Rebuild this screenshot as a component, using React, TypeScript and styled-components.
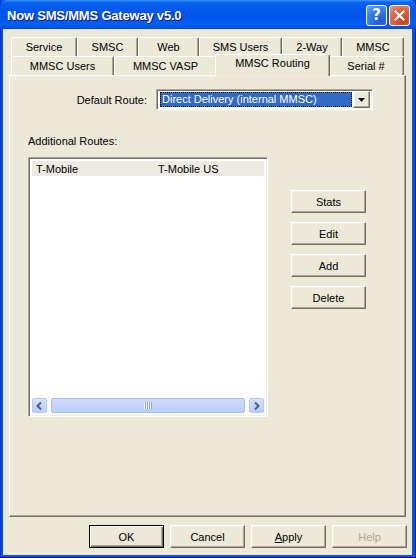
import React, { FC } from 'react';
import styled, { createGlobalStyle, css } from 'styled-components';

const GlobalStyle = createGlobalStyle`
	html, body {
		margin: 0;
		padding: 0;
		background: #ffffff;
	}
	* {
		box-sizing: border-box;
	}
`;

const raised = css`
	background: #ece9d8;
	border: 1px solid;
	border-color: #ffffff #716f64 #716f64 #ffffff;
	box-shadow: inset -1px -1px 0 #aca899, inset 1px 1px 0 #f1efe2;
`;

const sunken = css`
	border: 1px solid;
	border-color: #aca899 #ffffff #ffffff #aca899;
	box-shadow: inset 1px 1px 0 #716f64, inset -1px -1px 0 #f1efe2;
`;

type TabDef = { label: string; width: number; selected?: boolean };

const rowOne: TabDef[] = [
	{ label: 'Service', width: 66 },
	{ label: 'SMSC', width: 61 },
	{ label: 'Web', width: 61 },
	{ label: 'SMS Users', width: 83 },
	{ label: '2-Way', width: 60 },
	{ label: 'MMSC', width: 62 },
];

const rowTwo: TabDef[] = [
	{ label: 'MMSC Users', width: 103 },
	{ label: 'MMSC VASP', width: 103 },
	{ label: 'MMSC Routing', width: 111, selected: true },
	{ label: 'Serial #', width: 76 },
];

const sideButtons = ['Stats', 'Edit', 'Add', 'Delete'];

const App: FC = () => {
	return (
		<Window>
			<GlobalStyle />
			<TitleBar>
				<Title>Now SMS/MMS Gateway v5.0</Title>
				<Caption>
					<HelpButton>?</HelpButton>
					<CloseButton>
						<svg width="11" height="11" viewBox="0 0 11 11">
							<path d="M1.5 1.5 L9.5 9.5 M9.5 1.5 L1.5 9.5" stroke="#fff" strokeWidth="2.2" strokeLinecap="square" />
						</svg>
					</CloseButton>
				</Caption>
			</TitleBar>
			<Client>
				<TabStrip>
					{[rowOne, rowTwo].map((row, i) => (
						<TabRow key={i}>
							{row.map((tab) => (
								<Tab key={tab.label} $width={tab.width} $selected={tab.selected}>
									{tab.label}
								</Tab>
							))}
						</TabRow>
					))}
				</TabStrip>
				<Panel>
					<RouteRow>
						<FieldLabel>Default Route:</FieldLabel>
						<Combo>
							<ComboValue>Direct Delivery (internal MMSC)</ComboValue>
							<ComboArrow>
								<svg width="7" height="4" viewBox="0 0 7 4">
									<path d="M0 0 H7 L3.5 4 Z" fill="#000" />
								</svg>
							</ComboArrow>
						</Combo>
					</RouteRow>
					<SectionLabel>Additional Routes:</SectionLabel>
					<ListArea>
						<ListBox>
							<ListRows>
								<ListRow>
									<ListCell $width={122}>T-Mobile</ListCell>
									<ListCell>T-Mobile US</ListCell>
								</ListRow>
							</ListRows>
							<HScroll>
								<ScrollArrow>
									<svg width="7" height="8" viewBox="0 0 7 8">
										<path d="M5 0.5 L1.5 4 L5 7.5" stroke="#4d6185" strokeWidth="2" fill="none" />
									</svg>
								</ScrollArrow>
								<ScrollThumb>
									<Grip />
								</ScrollThumb>
								<ScrollArrow>
									<svg width="7" height="8" viewBox="0 0 7 8">
										<path d="M2 0.5 L5.5 4 L2 7.5" stroke="#4d6185" strokeWidth="2" fill="none" />
									</svg>
								</ScrollArrow>
							</HScroll>
						</ListBox>
						<ButtonColumn>
							{sideButtons.map((b) => (
								<PushButton key={b}>{b}</PushButton>
							))}
						</ButtonColumn>
					</ListArea>
				</Panel>
				<Footer>
					<PushButton $default>OK</PushButton>
					<PushButton>Cancel</PushButton>
					<PushButton>
						<u>A</u>pply
					</PushButton>
					<PushButton $disabled>Help</PushButton>
				</Footer>
			</Client>
		</Window>
	);
};

const Window = styled.div`
	width: 416px;
	height: 558px;
	display: flex;
	flex-direction: column;
	background: #0055e5;
	box-shadow: inset -1px -1px 0 #00138c, inset 1px 0 0 #0831d9;
	font-family: 'Liberation Sans', Arial, sans-serif;
	font-size: 11px;
	color: #000;
	overflow: hidden;
`;

const TitleBar = styled.div`
	height: 29px;
	flex: none;
	display: flex;
	align-items: center;
	justify-content: space-between;
	padding: 0 6px 0 7px;
	border-radius: 7px 7px 0 0;
	background: linear-gradient(
		to bottom,
		#3d95ff 0%,
		#0a62ef 8%,
		#0058ee 30%,
		#0055ea 60%,
		#0061f6 85%,
		#0046d5 100%
	);
`;

const Title = styled.div`
	color: #ffffff;
	font-weight: bold;
	font-size: 13px;
	letter-spacing: -0.2px;
	text-shadow: 1px 1px 0 #0a1883;
	padding-top: 1px;
`;

const Caption = styled.div`
	display: flex;
	gap: 2px;
	padding-top: 1px;
`;

const captionButton = css`
	width: 21px;
	height: 21px;
	border: 1px solid #ffffff;
	border-radius: 3px;
	display: flex;
	align-items: center;
	justify-content: center;
	color: #ffffff;
`;

const HelpButton = styled.div`
	${captionButton};
	background: radial-gradient(circle at 70% 80%, #1e56d8 0%, #3a7cf5 60%, #6fa2ff 100%);
	font-family: 'DejaVu Sans', sans-serif;
	font-weight: bold;
	font-size: 15px;
`;

const CloseButton = styled.div`
	${captionButton};
	background: radial-gradient(circle at 70% 80%, #c7461e 0%, #e2653f 60%, #f09c7e 100%);
`;

const Client = styled.div`
	flex: 1;
	display: flex;
	flex-direction: column;
	margin: 0 4px 3px 3px;
	padding: 8px 6px 0 6px;
	background: #ece9d8;
`;

const TabStrip = styled.div`
	padding: 0 2px;
`;

const TabRow = styled.div`
	display: flex;
	height: 19px;
`;

const Tab = styled.div<{ $width: number; $selected?: boolean }>`
	width: ${(p) => p.$width}px;
	flex: none;
	height: 19px;
	background: #ece9d8;
	border-top: 1px solid #ffffff;
	border-left: 1px solid #ffffff;
	border-right: 1px solid #716f64;
	box-shadow: inset -1px 0 0 #aca899;
	border-radius: 2px 2px 0 0;
	text-align: center;
	padding-top: 3px;
	${(p) =>
		p.$selected &&
		css`
			position: relative;
			z-index: 2;
			height: 22px;
			width: ${p.$width + 4}px;
			margin: -2px -2px 0;
			padding-top: 2px;
		`}
`;

const Panel = styled.div`
	height: 442px;
	flex: none;
	${raised};
	padding: 13px 0 0 18px;
`;

const RouteRow = styled.div`
	display: flex;
	align-items: center;
	gap: 9px;
`;

const FieldLabel = styled.div`
	width: 119px;
	text-align: right;
`;

const Combo = styled.div`
	width: 217px;
	height: 21px;
	${sunken};
	background: #ffffff;
	display: flex;
	align-items: center;
	padding: 2px 2px 2px 3px;
	gap: 1px;
`;

const ComboValue = styled.div`
	flex: 1;
	height: 15px;
	background: #316ac5;
	color: #ffffff;
	border: 1px dotted #e8c860;
	outline: 1px dotted #000;
	outline-offset: -1px;
	padding-left: 1px;
	line-height: 13px;
	white-space: nowrap;
	overflow: hidden;
`;

const ComboArrow = styled.div`
	width: 17px;
	height: 17px;
	${raised};
	display: flex;
	align-items: center;
	justify-content: center;
`;

const SectionLabel = styled.div`
	margin-top: 25px;
	height: 13px;
`;

const ListArea = styled.div`
	display: flex;
	margin-top: 9px;
`;

const ListBox = styled.div`
	width: 240px;
	height: 260px;
	${sunken};
	background: #ffffff;
	padding: 2px;
	display: flex;
	flex-direction: column;
`;

const ListRows = styled.div`
	flex: 1;
	padding: 1px 1px 0;
`;

const ListRow = styled.div`
	display: flex;
	height: 15px;
	align-items: center;
	background: #eeece2;
	padding-left: 4px;
`;

const ListCell = styled.div<{ $width?: number }>`
	width: ${(p) => (p.$width ? `${p.$width}px` : 'auto')};
	white-space: nowrap;
`;

const HScroll = styled.div`
	height: 17px;
	display: flex;
	align-items: center;
	gap: 2px;
	padding: 1px 1px;
	background: #fbfbf7;
`;

const ScrollArrow = styled.div`
	width: 15px;
	height: 15px;
	border: 1px solid #b7caf5;
	border-radius: 2px;
	background: linear-gradient(to bottom, #d6e2fc, #b9cdfa);
	display: flex;
	align-items: center;
	justify-content: center;
`;

const ScrollThumb = styled.div`
	flex: 1;
	height: 15px;
	margin: 0 2px;
	border: 1px solid #a8c0f2;
	border-radius: 2px;
	background: linear-gradient(to bottom, #cddbfc, #bcd0fa);
	display: flex;
	align-items: center;
	justify-content: center;
`;

const Grip = styled.div`
	width: 8px;
	height: 7px;
	background: repeating-linear-gradient(
		to right,
		#eef3fe 0px,
		#eef3fe 1px,
		#8ca8e6 1px,
		#8ca8e6 2px
	);
`;

const ButtonColumn = styled.div`
	display: flex;
	flex-direction: column;
	gap: 9px;
	margin-left: 23px;
	padding-top: 33px;
`;

const PushButton = styled.div<{ $default?: boolean; $disabled?: boolean }>`
	width: 75px;
	height: 23px;
	flex: none;
	${raised};
	display: flex;
	align-items: center;
	justify-content: center;
	color: ${(p) => (p.$disabled ? '#aca899' : '#000')};
	${(p) =>
		p.$default &&
		css`
			border: 1px solid #000;
			box-shadow: inset 1px 1px 0 #ffffff, inset -1px -1px 0 #716f64, inset -2px -2px 0 #aca899;
		`}
	u {
		text-decoration: underline;
	}
`;

const Footer = styled.div`
	display: flex;
	justify-content: flex-end;
	gap: 6px;
	margin-top: 8px;
	margin-right: -1px;
`;

export default App;
